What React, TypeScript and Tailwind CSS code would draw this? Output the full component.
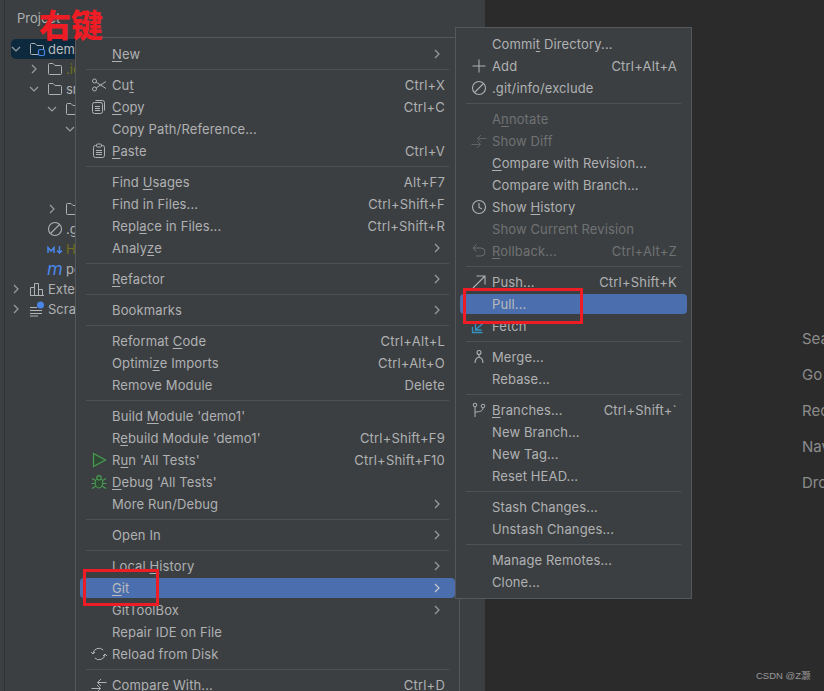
import React from "react";

const S = ({ children, c = "#afb1b3", w = 1 }: { children: React.ReactNode; c?: string; w?: number }) => (
  <svg width="16" height="16" viewBox="0 0 16 16" fill="none" stroke={c} strokeWidth={w}>{children}</svg>
);

const Cut = () => (
  <S><circle cx="3.5" cy="4" r="2" /><circle cx="3.5" cy="12" r="2" /><path d="M5.2 5.2 15 11.5M5.2 10.8 15 4.5" /></S>
);
const CopyI = () => (
  <S><path d="M4.5 1.5h7a2 2 0 0 1 2 2v8" /><path d="M3.5 3.5h7" /><rect x="1.5" y="3.5" width="10" height="11" rx="2" /><path d="M4 7.5h5M4 9.5h5M4 11.5h5" /></S>
);
const Paste = () => (
  <S><rect x="2.5" y="2.5" width="11" height="12" rx="2" /><rect x="5.5" y="1" width="5" height="3" rx="1" fill="#3c3f41" /><path d="M5 7.5h6M5 9.5h6M5 11.5h6" /></S>
);
const Run = () => (
  <S c="#499c54" w={1.2}><path d="M2.5 1.5v13L14.5 8z" fill="#2f4a34" /></S>
);
const Debug = () => (
  <S c="#499c54" w={1.1}><ellipse cx="8" cy="9" rx="3.8" ry="5" fill="#2f4a34" /><circle cx="8" cy="3.8" r="2.2" fill="#2f4a34" /><path d="M1 4.5l3.4 2M15 4.5l-3.4 2M.5 9.5h3.7M15.5 9.5h-3.7M1 14.5l3.6-2.2M15 14.5l-3.6-2.2" /></S>
);
const Reload = () => (
  <S><path d="M2 7.5a6 6 0 0 1 10.2-3.5" /><path d="M14 8.5a6 6 0 0 1-10.2 3.5" /><path d="M0 6l2 2 2-2M12 10l2-2 2 2" /></S>
);
const Compare = ({ c = "#afb1b3" }: { c?: string }) => (
  <S c={c}><path d="M6.5 5.5h9M10 2 6.5 5.5 10 9" /><path d="M.5 11.5h9M6 8l3.5 3.5L6 15" /></S>
);
const PlusI = () => <S><path d="M8 1.5v13M1.5 8h13" /></S>;
const Ban = () => <S w={1.1}><circle cx="8" cy="8" r="6.5" /><path d="M3.5 12.5l9-9" /></S>;
const Clock = () => <S w={1.1}><circle cx="8" cy="8" r="6.5" /><path d="M8 4v4.5l3 1.5" /></S>;
const Rollback = () => (
  <S c="#6a6d70"><path d="M5.5 1.5 2 5l3.5 3.5" /><path d="M2 5h8a4 4 0 0 1 0 8H5" /></S>
);
const Push = () => <S w={1.1}><path d="M2 14 14 2M5.5 2H14v8.5" /></S>;
const Fetch = () => (
  <S c="#3592c4" w={1.3}><path d="M14.5 3 5 11.5M4.5 6v6h6" /><path d="M1.5 9v5.5h10" /></S>
);
const Merge = () => (
  <S w={1.1}><circle cx="8" cy="3.5" r="2" /><path d="M8 5.5v2.5M8 8c-3 1-4 3-4 6M8 8c3 1 4 3 4 6" /></S>
);
const Branches = () => (
  <S><circle cx="4" cy="3" r="1.8" /><circle cx="12" cy="4" r="1.8" /><path d="M4 4.8V15M4 10c5 0 8-1 8-4.2" /></S>
);

type Item =
  | "-"
  | { t: string; k?: string; sub?: boolean; icon?: React.ReactNode; off?: boolean; on?: boolean };

const main: Item[] = [
  { t: "_New", sub: true },
  "-",
  { t: "Cu_t", k: "Ctrl+X", icon: <Cut /> },
  { t: "_Copy", k: "Ctrl+C", icon: <CopyI /> },
  { t: "Copy Path/Reference..." },
  { t: "_Paste", k: "Ctrl+V", icon: <Paste /> },
  "-",
  { t: "Find _Usages", k: "Alt+F7" },
  { t: "Find in Files...", k: "Ctrl+Shift+F" },
  { t: "Repl_ace in Files...", k: "Ctrl+Shift+R" },
  { t: "Analy_ze", sub: true },
  "-",
  { t: "_Refactor", sub: true },
  "-",
  { t: "Bookmarks", sub: true },
  "-",
  { t: "Reformat _Code", k: "Ctrl+Alt+L" },
  { t: "Optimi_ze Imports", k: "Ctrl+Alt+O" },
  { t: "Remove Module", k: "Delete" },
  "-",
  { t: "Build _Module 'demo1'" },
  { t: "R_ebuild Module 'demo1'", k: "Ctrl+Shift+F9" },
  { t: "R_un 'All Tests'", k: "Ctrl+Shift+F10", icon: <Run /> },
  { t: "_Debug 'All Tests'", icon: <Debug /> },
  { t: "More Run/Debug", sub: true },
  "-",
  { t: "Open In", sub: true },
  "-",
  { t: "Local _History", sub: true },
  { t: "_Git", sub: true, on: true },
  { t: "GitToolBox", sub: true },
  { t: "Repair IDE on File" },
  { t: "Reload from Disk", icon: <Reload /> },
  "-",
  { t: "Compare With...", k: "Ctrl+D", icon: <Compare /> },
];

const git: Item[] = [
  { t: "Commi_t Directory..." },
  { t: "Add", k: "Ctrl+Alt+A", icon: <PlusI /> },
  { t: ".git/info/exclude", icon: <Ban /> },
  "-",
  { t: "A_nnotate", off: true },
  { t: "Show Diff", off: true, icon: <Compare c="#5f6265" /> },
  { t: "_Compare with Revision..." },
  { t: "Compare with Branch..." },
  { t: "Show _History", icon: <Clock /> },
  { t: "Show Current Revision", off: true },
  { t: "_Rollback...", k: "Ctrl+Alt+Z", off: true, icon: <Rollback /> },
  "-",
  { t: "Push...", k: "Ctrl+Shift+K", icon: <Push /> },
  { t: "Pull...", on: true },
  { t: "Fetch", icon: <Fetch /> },
  "-",
  { t: "Merge...", icon: <Merge /> },
  { t: "Rebase..." },
  "-",
  { t: "_Branches...", k: "Ctrl+Shift+`", icon: <Branches /> },
  { t: "New Branch..." },
  { t: "New Tag..." },
  { t: "Reset HEAD..." },
  "-",
  { t: "Stash Changes..." },
  { t: "Unstash Changes..." },
  "-",
  { t: "Manage Remotes..." },
  { t: "Clone..." },
];

const Label = ({ t }: { t: string }) => {
  const i = t.indexOf("_");
  if (i < 0) return <span>{t}</span>;
  return (
    <span>
      {t.slice(0, i)}
      <span className="underline underline-offset-2">{t[i + 1]}</span>
      {t.slice(i + 2)}
    </span>
  );
};

const Menu = ({ items, className }: { items: Item[]; className: string }) => (
  <div className={`absolute bg-[#3c3f41] border border-[#55585a] py-[5px] text-[13px] leading-[22px] tracking-[0.12px] whitespace-nowrap ${className}`}>
    {items.map((it, i) =>
      it === "-" ? (
        <div key={i} className="h-[9px] flex items-center px-[10px]">
          <div className="h-px w-full bg-[#515151]" />
        </div>
      ) : (
        <div key={i} className="h-[22px] py-px mx-[4px]">
          <div
            className={`h-5 pl-[11px] pr-[10px] flex items-center rounded-[4px] ${it.on ? "bg-[#4b6eaf] text-[#bbbbbb]" : it.off ? "text-[#6f7274]" : "text-[#afb1b3]"}`}
          >
            <span className="w-4 h-4 mr-[5px] flex items-center justify-center shrink-0">{it.icon}</span>
            <span className="flex-1"><Label t={it.t} /></span>
            {it.k && <span className="tracking-[0.2px]">{it.k}</span>}
            {it.sub && (
              <svg width="8" height="10" viewBox="0 0 8 10" fill="none" stroke={it.on ? "#c8ccd0" : "#9a9d9f"} strokeWidth="1.2" className="mr-1">
                <path d="M2 1l4 4-4 4" />
              </svg>
            )}
          </div>
        </div>
      )
    )}
  </div>
);

const Chev = ({ open }: { open?: boolean }) => (
  <svg width="10" height="10" viewBox="0 0 10 10" fill="none" stroke="#9a9d9f" strokeWidth="1.2" className="shrink-0">
    <path d={open ? "M1 3l4 4 4-4" : "M3 1l4 4-4 4"} />
  </svg>
);

const Folder = ({ mod }: { mod?: boolean }) => (
  <svg width="16" height="16" viewBox="0 0 16 16" fill="none" className="shrink-0 overflow-visible">
    <path d="M1.5 3.5a1 1 0 0 1 1-1h3.5l2 2h5.5a1 1 0 0 1 1 1v7a1 1 0 0 1-1 1h-11a1 1 0 0 1-1-1z" stroke="#afb1b3" />
    {mod && <rect x="9.5" y="8.5" width="6" height="6" rx="1.5" fill="#0d293e" stroke="#4a86e8" strokeWidth="1.2" />}
  </svg>
);

const Row = ({ pad, chev, icon, text, cls, sel }: { pad: number; chev?: "o" | "c"; icon?: React.ReactNode; text?: string; cls?: string; sel?: boolean }) => (
  <div
    className={`h-5 flex items-center whitespace-nowrap text-[13px] ${sel ? "bg-[#0d293e] rounded-[5px]" : ""} ${cls ?? "text-[#afb1b3]"}`}
    style={{ paddingLeft: pad }}
  >
    <span className="w-[18px] flex items-center shrink-0">{chev && <Chev open={chev === "o"} />}</span>
    <span className="w-4 h-4 mr-[3px] shrink-0">{icon}</span>
    <span className="pt-[2px]">{text}</span>
  </div>
);

export default function App() {
  return (
    <div className="relative w-[824px] h-[691px] overflow-hidden flex bg-[#2b2b2b] font-['Inter','Noto_Sans_CJK_SC',sans-serif]">
      <div className="w-[4px] shrink-0 bg-[#3c3f41] border-r border-[#323232] box-content" />
      <div className="w-[480px] shrink-0 bg-[#3c3f41] pt-[8px] pl-[6px]">
        <div className="h-[20px] pl-[6px] text-[13px] leading-[20px] text-[#afb1b3]">Project</div>
        <div className="mt-[11px]">
          <Row pad={0} sel chev="o" icon={<Folder mod />} text="demo1" cls="text-[#bbbbbb]" />
          <Row pad={18} chev="c" icon={<Folder />} text=".idea" cls="text-[#6f6f1e]" />
          <Row pad={18} chev="o" icon={<Folder />} text="src" />
          <Row pad={36} chev="o" icon={<Folder />} text="main" />
          <Row pad={54} chev="o" />
          <div className="h-[60px]" />
          <Row pad={36} chev="c" icon={<Folder />} text="test" />
          <Row
            pad={18}
            icon={<svg width="16" height="16" viewBox="0 0 16 16" fill="none" stroke="#afb1b3" strokeWidth="1.1"><circle cx="8" cy="8" r="6.5" /><path d="M3.5 12.5l9-9" /></svg>}
            text=".gitignore"
          />
          <Row
            pad={18}
            icon={<svg width="16" height="16" viewBox="0 0 16 16" fill="none" stroke="#4a86e8" strokeWidth="1.5"><path d="M1 12V6.5l3 3.5 3-3.5V12" /><path d="M12.5 5v6.5M10 9.5l2.5 2.5L15 9.5" /></svg>}
            text="HELP.md"
            cls="text-[#6f6f1e]"
          />
          <Row pad={18} icon={<span className="block text-[18px] leading-[15px] italic text-[#4a86e8]">m</span>} text="pom.xml" />
          <Row
            pad={0}
            chev="c"
            icon={<svg width="16" height="16" viewBox="0 0 16 16" fill="none" stroke="#afb1b3"><path d="M1.5 14.5v-8h4v8M5.5 14.5V2.5h4v12M9.5 14.5v-6h4v6M1 14.5h14" /></svg>}
            text="External Libraries"
          />
          <Row
            pad={0}
            chev="c"
            icon={<svg width="16" height="16" viewBox="0 0 16 16" fill="none" stroke="#afb1b3"><path d="M1 6.5h7M1 9.5h12M1 12.5h12M1 15h8" /><circle cx="11.5" cy="4" r="3.5" fill="#4a86e8" stroke="none" /></svg>}
            text="Scratches and Consoles"
          />
        </div>
      </div>
      <div className="flex-1 min-w-0 pl-[317px] pt-[328px] flex flex-col gap-[15px] text-[15px] leading-[21px] text-[#8c8c8c] whitespace-nowrap">
        <div>Search Everywhere</div>
        <div>Go to File</div>
        <div>Recent Files</div>
        <div>Navigation Bar</div>
        <div>Drop files here to open</div>
      </div>

      <Menu items={main} className="left-[75px] top-[37px] w-[385px]" />
      <Menu items={git} className="left-[455px] top-[27px] w-[237px]" />

      <div className="absolute left-[39px] top-[6px] text-[32px] leading-[40px] font-black text-[#ee1c25]">右键</div>
      <div className="absolute left-[83px] top-[569px] w-[76px] h-[37px] border-[3px] border-[#ee1c25]" />
      <div className="absolute left-[463px] top-[288px] w-[120px] h-[36px] border-[3px] border-[#ee1c25]" />
      <div className="absolute left-[756px] top-[669px] text-[9.5px] leading-[14px] text-[#9a9a9a] font-['Liberation_Sans','Noto_Sans_CJK_SC',sans-serif]">CSDN @Z灏</div>
    </div>
  );
}
